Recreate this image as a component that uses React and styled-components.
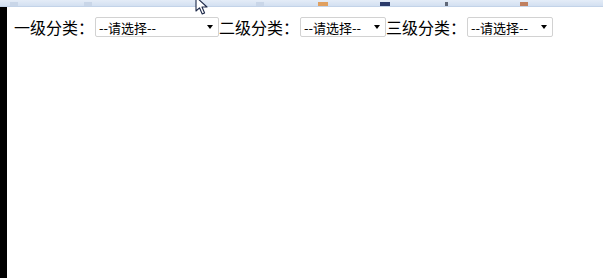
import styled, { createGlobalStyle } from "styled-components";

const Global = createGlobalStyle`
  html, body {
    margin: 0;
    padding: 0;
    background: #ffffff;
  }
  body {
    font-family: "Noto Sans CJK SC", "Microsoft YaHei", sans-serif;
  }
`;

const Frame = styled.div`
  position: relative;
  width: 603px;
  height: 278px;
  display: flex;
  flex-direction: column;
  overflow: hidden;
`;

const TabStrip = styled.div`
  height: 6px;
  flex: none;
  display: flex;
  align-items: flex-end;
  background: linear-gradient(#e4ecf7, #d3e0f1);
  border-bottom: 1px solid #c3d3e8;
`;

const TabBit = styled.span`
  width: ${(p) => p.w}px;
  height: 4px;
  margin-left: ${(p) => p.gap}px;
  background: ${(p) => p.color};
`;

const Body = styled.div`
  flex: 1;
  display: flex;
`;

const Edge = styled.div`
  width: 7px;
  background: #000;
  flex: none;
`;

const Page = styled.div`
  flex: 1;
  padding: 9px 8px 8px 7px;
`;

const FilterRow = styled.div`
  display: flex;
  align-items: center;
  height: 22px;
`;

const Label = styled.label`
  font-size: 16px;
  color: #000;
  line-height: 22px;
  white-space: nowrap;
  margin-right: 1px;
`;

const SelectWrap = styled.span`
  position: relative;
  display: inline-flex;
  width: ${(p) => p.w}px;
  height: 20px;
`;

const Select = styled.select`
  appearance: none;
  -webkit-appearance: none;
  width: 100%;
  height: 100%;
  box-sizing: border-box;
  border: 1px solid #d2d2d2;
  border-radius: 2px;
  background: #fff;
  padding: 0 14px 0 3px;
  font-family: "Noto Sans CJK SC", sans-serif;
  font-size: 13px;
  color: #000;
  outline: none;
`;

const Arrow = styled.span`
  position: absolute;
  right: 6px;
  top: 8px;
  width: 0;
  height: 0;
  border-left: 3.5px solid transparent;
  border-right: 3.5px solid transparent;
  border-top: 4px solid #000;
  pointer-events: none;
`;

const Cursor = styled.svg`
  position: absolute;
  left: 195px;
  top: -4px;
`;

function CategorySelect({ width }) {
  return (
    <SelectWrap w={width}>
      <Select defaultValue="">
        <option value="">--请选择--</option>
      </Select>
      <Arrow />
    </SelectWrap>
  );
}

export default function App() {
  return (
    <>
      <Global />
      <Frame>
        <TabStrip>
          <TabBit w={8} gap={10} color="#c9d6e8" />
          <TabBit w={8} gap={66} color="#c9d6e8" />
          <TabBit w={8} gap={164} color="#c9d6e8" />
          <TabBit w={10} gap={54} color="#e0a060" />
          <TabBit w={10} gap={52} color="#2a3a6a" />
          <TabBit w={3} gap={55} color="#606878" />
          <TabBit w={8} gap={72} color="#c08060" />
        </TabStrip>
        <Body>
          <Edge />
          <Page>
            <FilterRow>
              <Label>一级分类：</Label>
              <CategorySelect width={124} />
              <Label>二级分类：</Label>
              <CategorySelect width={86} />
              <Label>三级分类：</Label>
              <CategorySelect width={86} />
            </FilterRow>
          </Page>
        </Body>
        <Cursor width="14" height="20" viewBox="0 0 14 20">
          <path
            d="M1 1 L1 15 L4.5 11.8 L7.2 18 L9.6 17 L7 11 L12 11 Z"
            fill="#fff"
            stroke="#1e2a4a"
            strokeWidth="1.1"
            strokeLinejoin="round"
          />
        </Cursor>
      </Frame>
    </>
  );
}
